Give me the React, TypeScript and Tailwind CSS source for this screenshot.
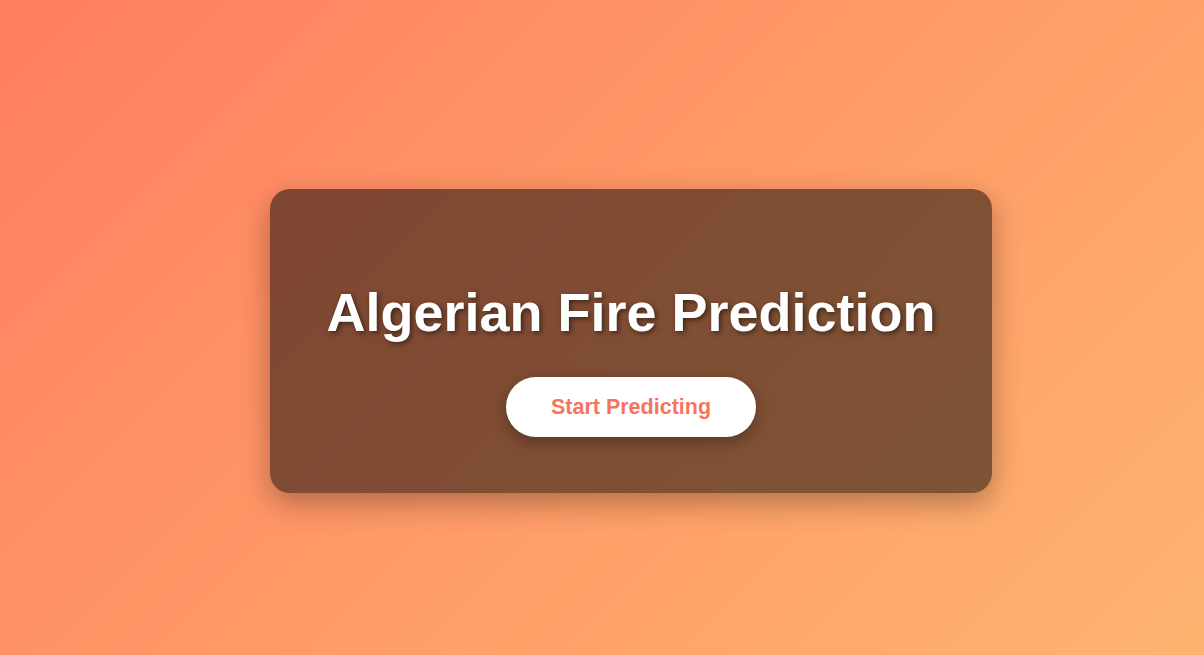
import React from "react";

export default function App() {
  return (
    <div
      className="min-h-[655px] w-full flex items-center justify-center pl-[58px] pt-[27px] bg-linear-135 from-[#ff7e5f] to-[#feb470]"
      style={{ fontFamily: '"Liberation Sans", Arial, sans-serif' }}
    >
      {/* card */}
      <div className="w-[722px] h-[304px] rounded-[20px] bg-black/50 shadow-[0_10px_30px_rgba(0,0,0,0.3)] flex flex-col items-center pt-[92px] pb-[56px]">
        <h1 className="text-[54px] leading-[62px] font-bold text-white whitespace-nowrap [text-shadow:2px_2px_5px_rgba(0,0,0,0.5)] mb-[34px]">
          Algerian Fire Prediction
        </h1>
        <button
          type="button"
          className="w-[250px] h-[60px] rounded-full bg-white text-[#f8735e] text-[21.5px] font-bold shadow-[0_5px_15px_rgba(0,0,0,0.3)]"
        >
          Start Predicting
        </button>
      </div>
    </div>
  );
}
